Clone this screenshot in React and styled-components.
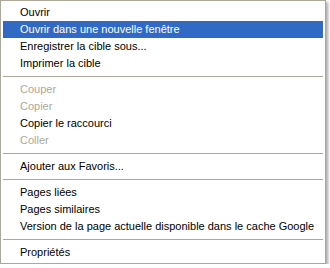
import React from 'react';
import styled, { createGlobalStyle } from 'styled-components';

const GlobalStyle = createGlobalStyle`
  body {
    margin: 0;
    background: #ffffff;
  }
`;

const Menu = styled.ul`
  list-style: none;
  margin: 0;
  width: 320px;
  padding: 3px 2px 2px 2px;
  background: #ffffff;
  border: 1px solid #aca899;
  box-shadow: 2px 2px 3px rgba(0, 0, 0, 0.35);
  font-family: 'Liberation Sans', Arial, sans-serif;
  font-size: 11px;
`;

const Item = styled.li`
  height: 17px;
  line-height: 17px;
  padding-left: 17px;
  white-space: nowrap;
  color: ${(p) => (p.$active ? '#ffffff' : p.$disabled ? '#aca899' : '#000000')};
  background: ${(p) => (p.$active ? '#316ac5' : 'transparent')};
  cursor: default;
`;

const Separator = styled.li`
  height: 9px;
  display: flex;
  align-items: center;

  &::after {
    content: '';
    flex: 1;
    height: 1px;
    background: #aca899;
  }
`;

const groups = [
  [
    { label: 'Ouvrir' },
    { label: 'Ouvrir dans une nouvelle fenêtre', active: true },
    { label: 'Enregistrer la cible sous...' },
    { label: 'Imprimer la cible' },
  ],
  [
    { label: 'Couper', disabled: true },
    { label: 'Copier', disabled: true },
    { label: 'Copier le raccourci' },
    { label: 'Coller', disabled: true },
  ],
  [{ label: 'Ajouter aux Favoris...' }],
  [
    { label: 'Pages liées' },
    { label: 'Pages similaires' },
    { label: 'Version de la page actuelle disponible dans le cache Google' },
  ],
  [{ label: 'Propriétés' }],
];

const App = () => {
  return (
    <>
      <GlobalStyle />
      <Menu>
        {groups.map((group, gi) => (
          <React.Fragment key={gi}>
            {gi > 0 && <Separator />}
            {group.map((item) => (
              <Item key={item.label} $active={item.active} $disabled={item.disabled}>
                {item.label}
              </Item>
            ))}
          </React.Fragment>
        ))}
      </Menu>
    </>
  );
};

export default App;
